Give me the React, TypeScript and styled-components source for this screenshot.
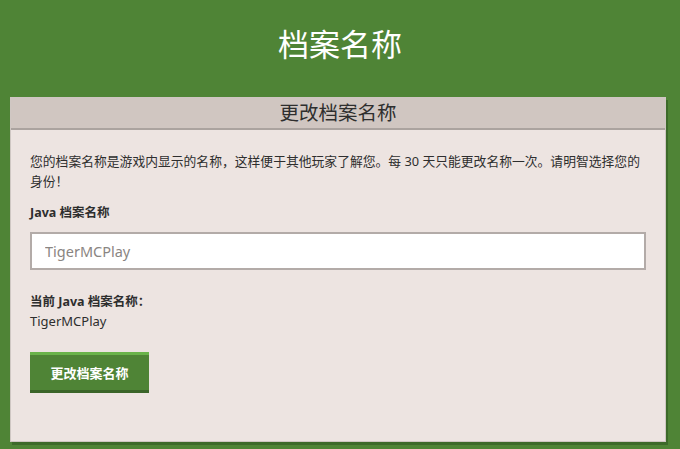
import React from "react";
import styled, { createGlobalStyle } from "styled-components";

const GlobalStyle = createGlobalStyle`
  html, body {
    margin: 0;
    padding: 0;
    background: #4f8436;
    font-family: "Noto Sans", "Noto Sans CJK SC", sans-serif;
    color: #2e2e2e;
  }
  * { box-sizing: border-box; }
`;

const Page = styled.div`
  width: 680px;
  height: 449px;
  overflow: hidden;
  background: #4f8436;
`;

const TopBar = styled.header`
  padding: 24px 0 33px;
  text-align: center;
`;

const PageTitle = styled.h1`
  margin: 0;
  font-size: 31px;
  line-height: 40px;
  font-weight: 400;
  color: #ffffff;
`;

const Card = styled.section`
  margin: 0 14px 0 10px;
  background: #ede4e1;
  border: 1px solid #cfc7c3;
  box-shadow: 2px 3px 0 #3d6a2a;
`;

const CardHeader = styled.div`
  height: 32px;
  background: #d0c6c1;
  border-bottom: 2px solid #aba39f;
  display: flex;
  align-items: center;
  justify-content: center;
`;

const CardTitle = styled.h2`
  margin: 0;
  font-size: 19.5px;
  font-weight: 400;
  line-height: 30px;
  color: #2e2e2e;
`;

const CardBody = styled.div`
  padding: 21px 19px 48px;
  display: flex;
  flex-direction: column;
  align-items: flex-start;
`;

const Intro = styled.p`
  margin: 0;
  font-size: 12.8px;
  line-height: 20px;
`;

const Label = styled.label<{ $gap: number }>`
  display: block;
  margin-top: ${(p) => p.$gap}px;
  font-size: 12.5px;
  line-height: 20px;
  font-weight: 700;
`;

const Input = styled.input`
  margin-top: 9px;
  width: 100%;
  height: 38px;
  border: 2px solid #b3aba8;
  background: #ffffff;
  padding: 0 13px;
  font-family: "Noto Sans", "Noto Sans CJK SC", sans-serif;
  font-size: 14.5px;
  color: #2e2e2e;
  outline: none;
  &::placeholder {
    color: #8a8582;
  }
`;

const CurrentValue = styled.div`
  font-size: 13px;
  line-height: 19px;
`;

const Button = styled.button`
  margin-top: 21px;
  width: 119px;
  height: 41px;
  background: #4f8436;
  border: none;
  border-top: 3px solid #6ab34a;
  border-bottom: 3px solid #3b6529;
  color: #ffffff;
  font-family: "Noto Sans", "Noto Sans CJK SC", sans-serif;
  font-size: 13px;
  font-weight: 700;
  cursor: pointer;
  padding: 0;
`;

export default function App() {
  return (
    <Page>
      <GlobalStyle />
      <TopBar>
        <PageTitle>档案名称</PageTitle>
      </TopBar>
      <Card>
        <CardHeader>
          <CardTitle>更改档案名称</CardTitle>
        </CardHeader>
        <CardBody>
          <Intro>
            您的档案名称是游戏内显示的名称，这样便于其他玩家了解您。每 30 天只能更改名称一次。请明智选择您的身份！
          </Intro>
          <Label $gap={12} htmlFor="profile-name">Java 档案名称</Label>
          <Input id="profile-name" placeholder="TigerMCPlay" />
          <Label $gap={22}>当前 Java 档案名称：</Label>
          <CurrentValue>TigerMCPlay</CurrentValue>
          <Button>更改档案名称</Button>
        </CardBody>
      </Card>
    </Page>
  );
}
